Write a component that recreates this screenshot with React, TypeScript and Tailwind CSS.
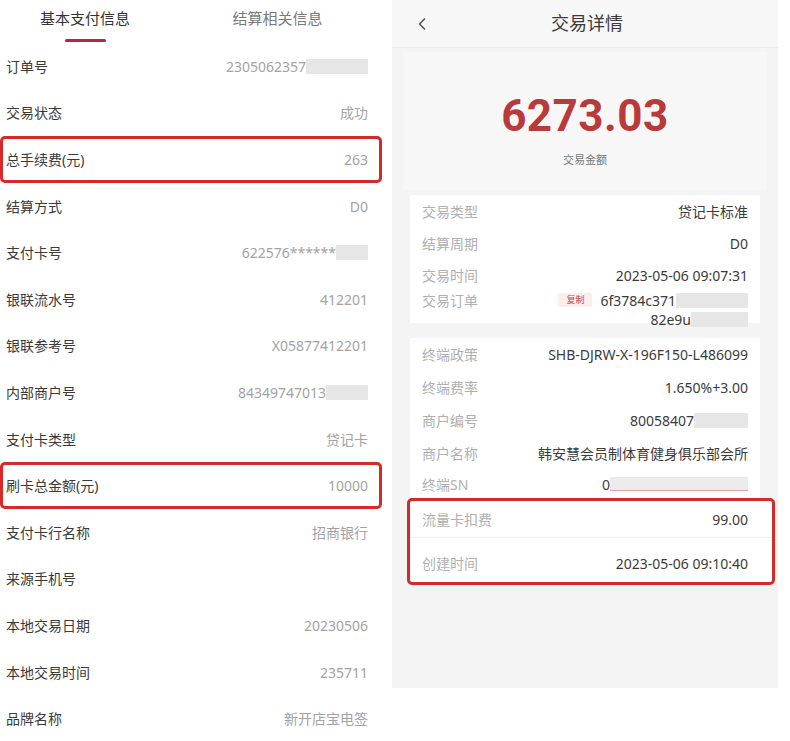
import { ChevronLeft } from 'lucide-react';

const font = { fontFamily: '"Noto Sans", "Noto Sans CJK SC", sans-serif' };

type Row = { label: string; value?: string; mask?: number; boxed?: boolean };

const leftRows: Row[] = [
  { label: '订单号', value: '2305062357', mask: 62 },
  { label: '交易状态', value: '成功' },
  { label: '总手续费(元)', value: '263', boxed: true },
  { label: '结算方式', value: 'D0' },
  { label: '支付卡号', value: '622576******', mask: 32 },
  { label: '银联流水号', value: '412201' },
  { label: '银联参考号', value: 'X05877412201' },
  { label: '内部商户号', value: '84349747013', mask: 42 },
  { label: '支付卡类型', value: '贷记卡' },
  { label: '刷卡总金额(元)', value: '10000', boxed: true },
  { label: '支付卡行名称', value: '招商银行' },
  { label: '来源手机号' },
  { label: '本地交易日期', value: '20230506' },
  { label: '本地交易时间', value: '235711' },
  { label: '品牌名称', value: '新开店宝电签' },
];

const terminalRows: Row[] = [
  { label: '终端政策', value: 'SHB-DJRW-X-196F150-L486099' },
  { label: '终端费率', value: '1.650%+3.00' },
  { label: '商户编号', value: '80058407', mask: 54 },
  { label: '商户名称', value: '韩安慧会员制体育健身俱乐部会所' },
];

function Mask({ w }: { w: number }) {
  return <span className="inline-block h-[15px] bg-[#e6e6e6]" style={{ width: w }} />;
}

function LeftRow({ row }: { row: Row }) {
  return (
    <div
      className={`mr-[3px] flex h-[46.6px] items-center justify-between rounded-[5px] border-[3px] pl-[3px] pr-[11px] text-[14px] ${
        row.boxed ? 'border-[#d42a2a]' : 'border-transparent'
      }`}
    >
      <span className="text-[#3a3a3a]">{row.label}</span>
      <span className="flex items-center text-[#a3a3a3]">
        {row.value}
        {row.mask ? <Mask w={row.mask} /> : null}
      </span>
    </div>
  );
}

function DetailRow({ row, h = 'h-[33px]' }: { row: Row; h?: string }) {
  return (
    <div className={`flex ${h} items-center justify-between px-[12px] text-[14px]`}>
      <span className="text-[#b0b0b0]">{row.label}</span>
      <span className="flex items-center text-[#3b3b3b]">
        {row.value}
        {row.mask ? <Mask w={row.mask} /> : null}
      </span>
    </div>
  );
}

export default function App() {
  return (
    <div className="flex h-[741px] w-[790px] overflow-hidden bg-white" style={font}>
      {/* left phone: basic payment info */}
      <section className="w-[385px] shrink-0">
        <div className="flex h-[43px] text-[15px]">
          <div className="flex w-[176px] flex-col items-center pt-[7px]">
            <span className="leading-[22px] text-[#333]">基本支付信息</span>
            <span className="mt-[10px] h-[3px] w-[41px] rounded-full bg-[#b02a45]" />
          </div>
          <div className="flex w-[222px] justify-center pt-[7px]">
            <span className="leading-[22px] text-[#7a7a7a]">结算相关信息</span>
          </div>
        </div>
        {leftRows.map((row) => (
          <LeftRow key={row.label} row={row} />
        ))}
      </section>

      {/* right phone: transaction detail */}
      <section className="ml-[7px] flex h-[688px] w-[386px] shrink-0 flex-col bg-[#f4f4f4]">
        <header className="flex h-[48px] items-center border-b border-[#ececec] bg-[#f7f7f7] pl-[20px]">
          <ChevronLeft size={20} strokeWidth={2} className="text-[#555]" />
          <h1 className="ml-[119px] text-[18px] text-[#3a3a3a]">交易详情</h1>
        </header>

        <div className="mx-[11px] mt-[4px] flex h-[138px] flex-col items-center bg-[#f7f7f7] pt-[42px]">
          <div
            className="text-[44px] font-bold leading-[44px] tracking-[0.5px] text-[#b93a3a]"
            style={{ fontFamily: 'Roboto, "Noto Sans", sans-serif' }}
          >
            6273.03
          </div>
          <div className="mt-[14px] text-[11px] text-[#777]">交易金额</div>
        </div>

        <div className="mx-[18px] mt-[5px] bg-white">
          <DetailRow row={{ label: '交易类型', value: '贷记卡标准' }} h="h-[32px]" />
          <DetailRow row={{ label: '结算周期', value: 'D0' }} h="h-[32px]" />
          <DetailRow row={{ label: '交易时间', value: '2023-05-06 09:07:31' }} h="h-[32px]" />
          <div className="flex h-[32px] items-start justify-between px-[12px] text-[14px] leading-[19px]">
            <span className="text-[#b0b0b0]">交易订单</span>
            <div className="flex items-start">
              <span className="mr-[8px] mt-[2px] rounded-[2px] bg-[#fdeeee] px-[8px] text-[9px] leading-[14px] text-[#d04848]">
                复制
              </span>
              <div className="flex flex-col items-end text-[#3b3b3b]">
                <span className="flex items-center">
                  6f3784c371
                  <Mask w={72} />
                </span>
                <span className="flex items-center">
                  82e9u
                  <Mask w={57} />
                </span>
              </div>
            </div>
          </div>
        </div>

        <div className="mx-[18px] mt-[15px] bg-white">
          {terminalRows.map((row) => (
            <DetailRow key={row.label} row={row} />
          ))}
          <div className="flex h-[28px] items-center justify-between px-[12px] text-[14px]">
            <span className="text-[#b0b0b0]">终端SN</span>
            <span className="flex items-center text-[#3b3b3b]">
              0
              <span className="inline-block h-[14px] w-[138px] border-b border-[#e0a0a0] bg-[#ebebeb]" />
            </span>
          </div>
        </div>

        <div className="ml-[15px] mr-[3px] rounded-[5px] border-[3px] border-[#d42a2a] bg-white">
          <div className="flex h-[37px] items-center justify-between border-b border-[#f0f0f0] pl-[12px] pr-[24px] text-[14px]">
            <span className="text-[#b0b0b0]">流量卡扣费</span>
            <span className="text-[#3b3b3b]">99.00</span>
          </div>
          <div className="flex h-[44px] items-center justify-between pl-[12px] pr-[24px] pt-[6px] text-[14px]">
            <span className="text-[#b0b0b0]">创建时间</span>
            <span className="text-[#3b3b3b]">2023-05-06 09:10:40</span>
          </div>
        </div>
      </section>
    </div>
  );
}
